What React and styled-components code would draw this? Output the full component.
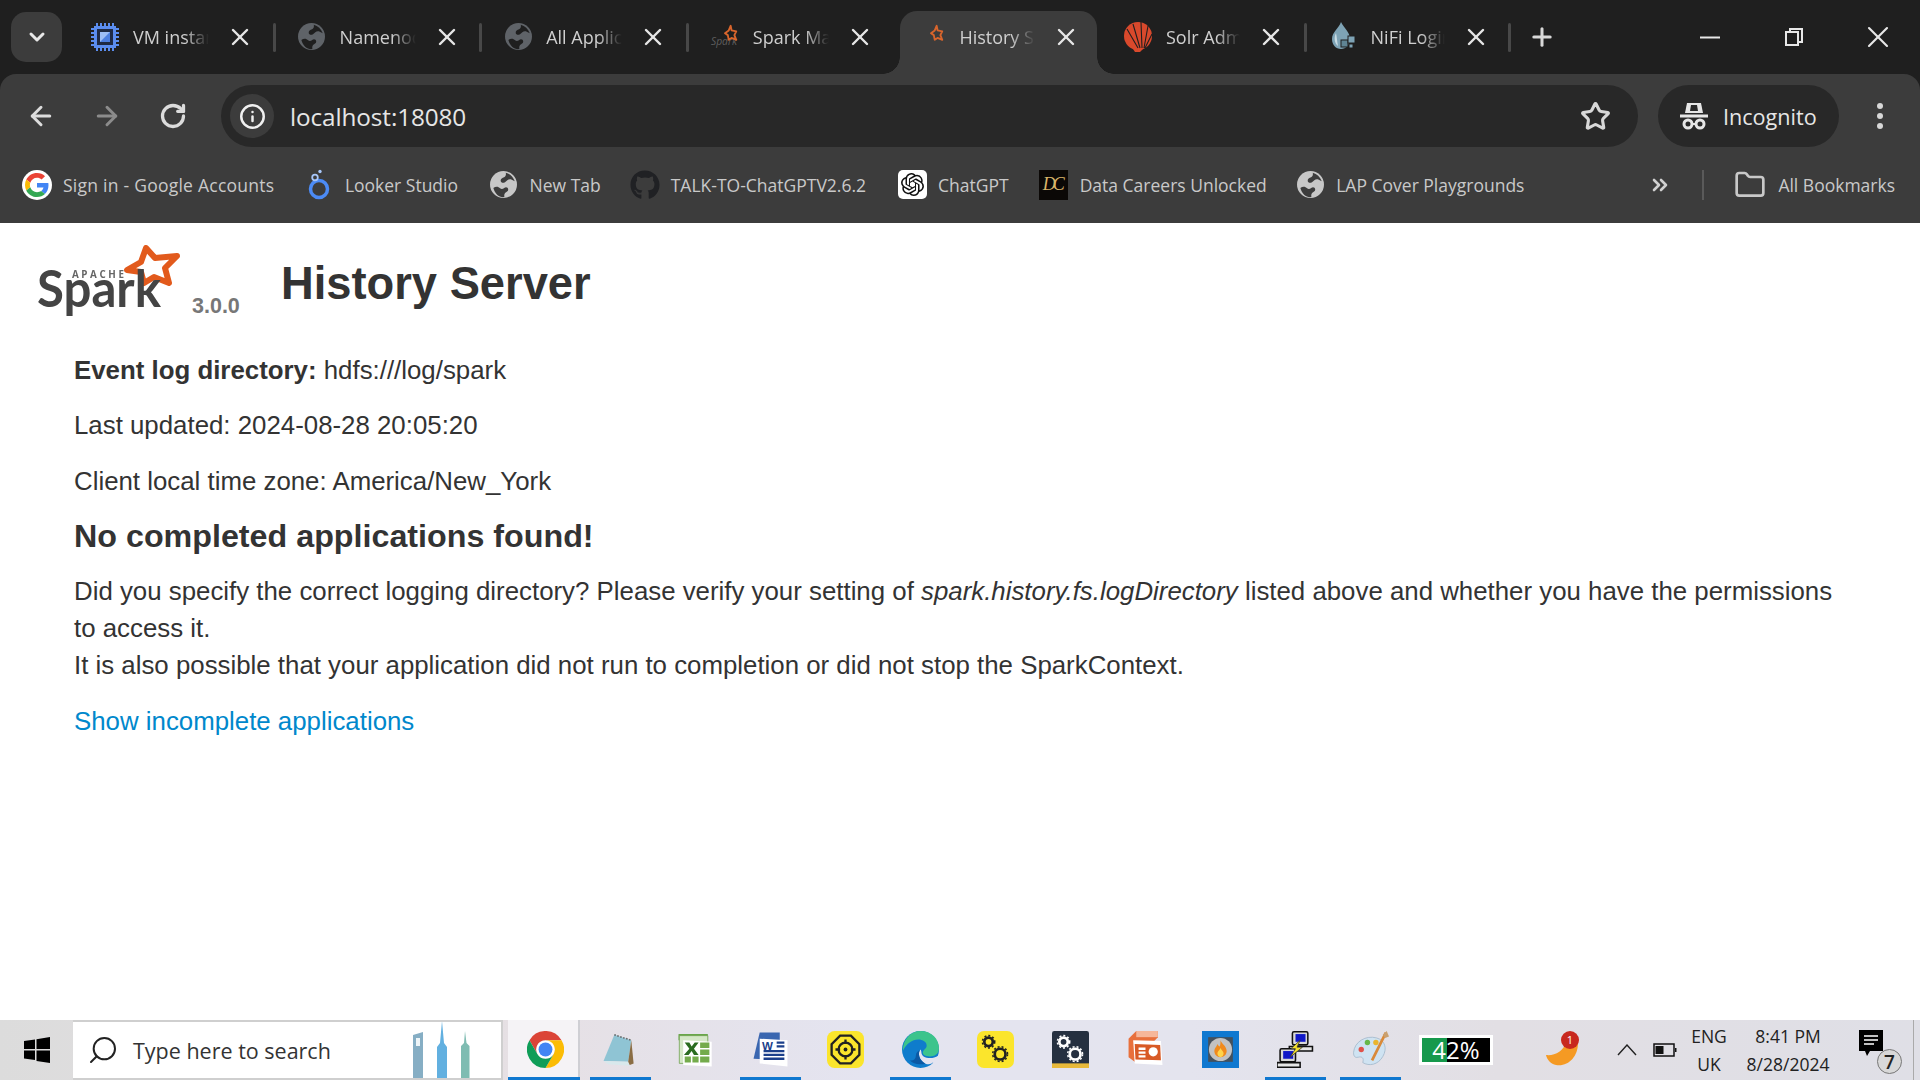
import React from "react";
import styled, { createGlobalStyle } from "styled-components";
import { ArrowLeft, ArrowRight, RotateCw, Info, Star, ChevronDown, X, Plus, Folder, ChevronsRight, Search } from "lucide-react";
import { FaGithub } from "react-icons/fa";
import { SiOpenai } from "react-icons/si";

const UI = `"Open Sans", "Noto Sans", sans-serif`;
const WEB = `"Liberation Sans", Arial, sans-serif`;

const Global = createGlobalStyle`
  html, body { margin: 0; padding: 0; height: 100%; background: #1f1f1f; overflow: hidden; }
  #root { height: 100%; }
  * { box-sizing: border-box; }
`;

const Shell = styled.div`
  display: flex; flex-direction: column; height: 1080px; width: 1920px; background: #1f1f1f;
`;
const TabStrip = styled.div`
  display: flex; align-items: center; height: 74px; padding-left: 11px; flex: none;
`;
const TabMenu = styled.div`
  width: 51px; height: 50px; margin-right: 7px; margin-top: -1px; border-radius: 15px; background: #3c3c3c;
  display: flex; align-items: center; justify-content: center; color: #e8e8e8; flex: none;
`;
const TabBox = styled.div`
  position: relative; flex: 0 0 ${p => (p.$narrow ? "204.6px" : "206.6px")}; height: 74px; display: flex; align-items: center; padding-left: 21px;
  z-index: ${p => (p.$active ? 2 : 1)};
  &::before {
    content: ""; display: ${p => (p.$active ? "block" : "none")}; position: absolute; left: 5px; right: 5px; top: 11px; bottom: 0;
    background: #3c3c3c; border-radius: 17px 17px 0 0;
  }
  &::after {
    content: ""; display: ${p => (p.$sep ? "block" : "none")}; position: absolute; right: 0; top: 23px; width: 3px; height: 29px;
    background: #484848; border-radius: 2px;
  }
`;
const Flare = styled.span`
  position: absolute; bottom: 0; width: 17px; height: 17px; ${p => (p.$side === "left" ? "left: -12px;" : "right: -12px;")}
  background: radial-gradient(circle at ${p => (p.$side === "left" ? "0 0" : "100% 0")}, transparent 16.5px, #3c3c3c 17px);
`;
const TabIcon = styled.span`
  position: relative; width: 30px; height: 30px; display: flex; align-items: center; justify-content: center; flex: none; margin-right: 13px; margin-top: -1px;
`;
const TabTitle = styled.span`
  position: relative; width: ${p => (p.$narrow ? "74px" : "76px")}; overflow: hidden; white-space: nowrap; font: 400 18px ${UI}; color: #cfcfcf; flex: none;
  -webkit-mask-image: linear-gradient(to right, #000 68%, transparent 100%);
  mask-image: linear-gradient(to right, #000 68%, transparent 100%);
`;
const TabClose = styled.span`
  position: relative; margin-left: 17px; display: flex; color: #e6e6e6; flex: none;
`;
const NewTab = styled.div`
  width: 62px; display: flex; justify-content: center; color: #d8d8d8; padding-right: 0;
`;
const WindowControls = styled.div`
  margin-left: auto; display: flex; align-items: center; height: 74px; color: #e8e8e8;
`;
const WinBtn = styled.div`
  width: 84px; display: flex; align-items: center; justify-content: center;
`;

const Chrome = styled.div`
  background: #3c3c3c; border-radius: 16px 16px 0 0; flex: none; height: 149px; display: flex; flex-direction: column;
`;
const NavRow = styled.div`
  display: flex; align-items: center; height: 84px; padding: 11px 0 11px 8px;
`;
const NavBtn = styled.div`
  width: 66px; display: flex; justify-content: center; color: ${p => (p.$off ? "#8c8c8c" : "#dcdcdc")}; flex: none;
`;
const Omnibox = styled.div`
  flex: 1; height: 62px; margin-left: 15px; border-radius: 31px; background: #282828; display: flex; align-items: center; padding: 0 27px 0 9px;
`;
const InfoChip = styled.div`
  width: 44px; height: 44px; border-radius: 50%; background: #3c3c3c; display: flex; align-items: center; justify-content: center; color: #f0f0f0;
`;
const Url = styled.div`
  margin-left: 16px; font: 400 24.3px ${UI}; color: #e6e6e6; letter-spacing: -0.1px;
`;
const StarBtn = styled.div`
  margin-left: auto; display: flex; color: #d8d8d8;
`;
const ProfileChip = styled.div`
  margin-left: 20px; width: 181px; height: 62px; border-radius: 31px; background: #282828; display: flex; align-items: center; padding-left: 21px; gap: 14px;
  font: 400 21.6px ${UI}; color: #e6e6e6; flex: none;
`;
const KebabCell = styled.div`
  width: 81px; display: flex; justify-content: center; flex: none;
`;
const BookmarkBar = styled.div`
  display: flex; align-items: center; height: 65px; padding: 0 25px 12px 22px;
`;
const Bookmark = styled.div`
  display: flex; align-items: center; margin-right: ${p => p.$gap}px; font: 400 17.5px ${UI}; color: #c9c9c9; white-space: nowrap;
  letter-spacing: ${p => p.$track || 0}px;
`;
const BmIcon = styled.span`
  display: flex; align-items: center; justify-content: center; width: 30px; height: 30px; margin-right: 11px; flex: none;
`;
const BookmarkEnd = styled.div`
  margin-left: auto; display: flex; align-items: center; font: 400 17.5px ${UI}; color: #c9c9c9; white-space: nowrap;
`;
const More = styled.span`
  display: flex; color: #d0d0d0; margin-right: 30px;
`;
const VSep = styled.span`
  width: 2px; height: 30px; background: #5a5a5a; margin-right: 30px;
`;
const FolderGlyph = styled.span`
  display: flex; color: #c9c9c9; margin-right: 12px;
`;

const Page = styled.main`
  flex: 1; background: #fff; padding: 22px 74px 0 37px; font: 400 25.83px/37.2px ${WEB}; color: #333;
`;
const PageHeader = styled.header`
  display: flex; align-items: flex-start; height: 72px; margin-bottom: 34.5px;
`;
const Logo = styled.svg`
  width: 141px; height: 72px; flex: none; filter: blur(0.4px); overflow: visible;
`;
const Version = styled.span`
  margin: 49px 0 0 14px; font: 700 21.5px/24px ${WEB}; color: #777; width: 49px; flex: none;
`;
const Title = styled.h3`
  margin: 14px 0 0 40px; font: 700 45.3px/50px ${WEB}; color: #333;
`;
const Body = styled.div`
  margin-left: 37px;
`;
const Para = styled.p`
  margin: 0 0 18.5px;
`;
const Subhead = styled.h4`
  margin: -1px 0 18px; font: 700 32.25px/37.2px ${WEB}; color: #333;
`;
const Notes = styled.p`
  margin: 0 0 19.4px; line-height: 37px;
`;
const Link = styled.a`
  color: #0088cc; text-decoration: none;
`;

const Taskbar = styled.footer`
  flex: none; height: 60px; display: flex; align-items: center; position: relative;
  background: linear-gradient(90deg, #dcdcdc 0%, #e6e0e4 27%, #e4e4f0 45%, #e4e4ee 62%, #e2dfe4 78%, #dfdfe6 100%);
`;
const StartBtn = styled.div`
  width: 73px; display: flex; justify-content: center; flex: none;
`;
const SearchBox = styled.div`
  width: 430px; height: 60px; flex: none; background: #fff; border: solid #cfcfcf; border-width: 2px 2px 2px 0; display: flex; align-items: center; padding-left: 14px;
  font: 400 21.5px ${UI}; color: #333; overflow: hidden;
`;
const SearchIcon = styled.span`
  display: flex; margin-right: 14px; color: #222; transform: scaleX(-1);
`;
const Skyline = styled.svg`
  margin-left: auto; margin-right: 26px; flex: none; width: 66px; height: 58px;
`;
const AppStrip = styled.div`
  display: flex; margin-left: 5px; flex: none;
`;
const AppCell = styled.div`
  position: relative; width: 75px; height: 60px; display: flex; align-items: center; justify-content: center;
  background: ${p => (p.$focused ? "linear-gradient(90deg,#f5f3f6 0 94%,#cfcfd4 94% 96%,transparent 96%)" : "transparent")};
  &::after {
    content: ""; display: ${p => (p.$on ? "block" : "none")}; position: absolute; bottom: 0; left: ${p => (p.$focused ? "0" : "7px")}; width: ${p => (p.$focused ? "72px" : "61px")}; height: 3px; background: #0f78d0;
  }
`;
const AppGlyph = styled.svg`
  width: 37px; height: 37px; margin-top: -1px;
`;
const Meter = styled.div`
  margin-left: 11px; width: 74px; height: 30px; background: #fff; padding: 3px; flex: none; display: flex;
`;
const MeterFill = styled.div`
  flex: 1; position: relative; display: flex; align-items: center; justify-content: center; font: 400 24px/24px ${UI}; color: #fff;
  background: linear-gradient(90deg, #16994c 0 37%, #000 37%);
`;
const Tray = styled.div`
  display: flex; align-items: center; flex: none; margin-left: 51px; font: 400 17.5px/28px ${UI}; color: #222;
`;
const TrayApp = styled.svg`
  width: 38px; height: 38px; flex: none; margin-right: 35px; overflow: visible;
`;
const Badge = styled.text`
  font: 400 11px ${UI}; fill: #fff;
`;
const TrayGlyph = styled.svg`
  flex: none; margin-right: ${p => p.$gap}px;
`;
const TrayStack = styled.div`
  display: flex; flex-direction: column; align-items: center; width: ${p => p.$w}px; margin-left: ${p => p.$ml || 0}px; flex: none; white-space: nowrap;
`;
const Notify = styled.div`
  position: relative; width: 40px; height: 44px; margin-left: 20px; flex: none;
`;
const BubbleGlyph = styled.svg`
  display: block; margin-top: 2px;
`;
const NotifyCount = styled.span`
  position: absolute; right: -4px; bottom: -2px; width: 25px; height: 25px; border-radius: 50%; background: #d8d8d8; border: 1.5px solid #777;
  display: flex; align-items: center; justify-content: center; font: 600 19px ${UI}; color: #222;
`;
const Edge = styled.span`
  position: absolute; right: 6px; top: 0; bottom: 0; width: 1px; background: #aaa;
`;

const Globe = ({ color = "#5f6368", bg = "#1f1f1f", size = 27 }) => (
  <svg width={size} height={size} viewBox="0 0 24 24">
    <circle cx="12" cy="12" r="12" fill={color} />
    <path fill={bg} d="M14 1.5c3.8 1 6.5 3.6 8 7.5l-3.5-1.6c-2.2-.7-3.4 1.4-5.2 2.6-1.6 1-3.6.5-3.8-1.3-.2-1.8 1.5-2.6 3-3.2 1.4-.6 2-2.4 1.5-4z" />
    <path fill={bg} d="M3 15c2-1.6 4.5-1.4 6 .3 1 1.1 2.6.6 3.6-.2 1.5-1.2 3.5-.6 3.6 1.3.1 1.7-1.8 2-2.8 3.2-.8 1-.8 2.2-.6 3.6-4.6.6-8.4-3-9.8-8.2z" />
  </svg>
);
const Chip = () => (
  <svg width="30" height="30" viewBox="0 0 30 30">
    <g stroke="#5b8def" strokeWidth="2">
      {[8, 12, 16, 20, 24].map(v => <path key={v} d={`M${v - 1} 1v28M1 ${v - 1}h28`} />)}
    </g>
    <rect x="4" y="4" width="22" height="22" fill="#5b8def" />
    <rect x="7" y="7" width="16" height="16" fill="#1f2a44" />
    <path d="M10 10h10v10H10z" fill="#9dbdf5" /><path d="M20 10v10H10z" fill="#4d7fe0" />
  </svg>
);
const Spot = ({ withWord }) => (
  <svg width="32" height="30" viewBox="0 0 32 30">
    {withWord && <text x="1" y="24" fontFamily={UI} fontStyle="italic" fontSize="11" fill="#5e5e5e">Spark</text>}
    <path d="M22 3l1 5 5 1-2 4 2 5-5-2-3 2-1-5-3-2 4-3z" fill="none" stroke="#d9652c" strokeWidth="2" strokeLinejoin="round" />
  </svg>
);
const Solr = () => (
  <svg width="30" height="32" viewBox="0 0 30 32">
    <circle cx="15" cy="15" r="14" fill="#d9492c" />
    <g stroke="#1f1f1f" strokeWidth="1.1" fill="none">
      <path d="M4 8l11 19M10 3l7 24M18 1l1 26M25 5l-4 22M29 13l-7 14" />
    </g>
    <path d="M10 28h10l-3 3h-5z" fill="#d9492c" />
  </svg>
);
const Nifi = () => (
  <svg width="30" height="32" viewBox="0 0 30 32">
    <path d="M13 1c3 6 9 10 9 17 0 6-4 10-9 10S4 24 4 18C4 11 11 7 13 1z" fill="#7ea3b5" />
    <path d="M8 12c-2 4-2 10 2 13-1-4-1-9-2-13z" fill="#c9dbe3" />
    <rect x="13" y="19" width="7" height="7" fill="#5f8494" stroke="#1f1f1f" />
    <rect x="20" y="15" width="7" height="7" fill="#7ea3b5" stroke="#1f1f1f" />
    <rect x="21" y="23" width="4" height="4" fill="#7ea3b5" stroke="#1f1f1f" />
  </svg>
);
const GoogleG = () => (
  <svg width="30" height="30" viewBox="-6 -6 60 60">
    <circle cx="24" cy="24" r="30" fill="#fff" />
    <path fill="#EA4335" d="M24 9.5c3.54 0 6.71 1.22 9.21 3.6l6.85-6.85C35.9 2.38 30.47 0 24 0 14.62 0 6.51 5.38 2.56 13.22l7.98 6.19C12.43 13.72 17.74 9.5 24 9.5z" />
    <path fill="#4285F4" d="M46.98 24.55c0-1.57-.15-3.09-.38-4.55H24v9.02h12.94c-.58 2.96-2.26 5.48-4.78 7.18l7.73 6c4.51-4.18 7.09-10.36 7.09-17.65z" />
    <path fill="#FBBC05" d="M10.53 28.59c-.48-1.45-.76-2.99-.76-4.59s.27-3.14.76-4.59l-7.98-6.19C.92 16.46 0 20.12 0 24c0 3.88.92 7.54 2.56 10.78l7.97-6.19z" />
    <path fill="#34A853" d="M24 48c6.48 0 11.93-2.13 15.89-5.81l-7.73-6c-2.15 1.45-4.92 2.3-8.16 2.3-6.26 0-11.57-4.22-13.47-9.91l-7.98 6.19C6.51 42.62 14.62 48 24 48z" />
  </svg>
);
const Looker = () => (
  <svg width="24" height="31" viewBox="0 0 24 31">
    <circle cx="12" cy="20" r="8.5" fill="none" stroke="#4c8bf5" strokeWidth="3.5" />
    <circle cx="8" cy="8.5" r="2.8" fill="none" stroke="#a8c7fa" strokeWidth="1.8" />
    <circle cx="13" cy="2.5" r="1.7" fill="#a8c7fa" />
  </svg>
);
const ChatTile = styled.span`
  width: 29px; height: 29px; border-radius: 5px; background: #fff; display: flex; align-items: center; justify-content: center; color: #111;
`;
const DcTile = styled.span`
  width: 29px; height: 30px; background: #0b0806; display: flex; align-items: center; justify-content: center;
  font: italic 400 18px "Liberation Serif", serif; color: #d9b56a; letter-spacing: -3px; padding-right: 3px;
`;
const Hat = () => (
  <svg width="30" height="30" viewBox="0 0 30 30" fill="none">
    <path d="M8 2h14l2 10H6z" fill="#e6e6e6" /><path d="M12 4h6l1 6h-8z" fill="#282828" />
    <path d="M1 15h28" stroke="#e6e6e6" strokeWidth="3" />
    <circle cx="9" cy="23" r="4" stroke="#e6e6e6" strokeWidth="3" /><circle cx="21" cy="23" r="4" stroke="#e6e6e6" strokeWidth="3" />
    <path d="M13 23h4" stroke="#e6e6e6" strokeWidth="2" />
  </svg>
);
const Kebab = () => (
  <svg width="8" height="28" viewBox="0 0 8 28" fill="#d8d8d8">
    <circle cx="4" cy="4" r="3" /><circle cx="4" cy="14" r="3" /><circle cx="4" cy="24" r="3" />
  </svg>
);
const Restore = () => (
  <svg width="20" height="20" viewBox="0 0 20 20" fill="none" stroke="#e8e8e8" strokeWidth="2">
    <rect x="2" y="5" width="12" height="13" /><path d="M6 5V2h12v13h-4" />
  </svg>
);
const Gears = ({ c }) => (
  <g fill="none" stroke={c}>
    <circle cx="15" cy="14" r="5.5" strokeWidth="3.5" />
    <circle cx="30" cy="30" r="7" strokeWidth="3.5" />
    <circle cx="15" cy="14" r="8" strokeWidth="2" strokeDasharray="2.6 2.6" />
    <circle cx="30" cy="30" r="9.6" strokeWidth="2" strokeDasharray="2.6 2.6" />
  </g>
);

const tabs = [
  { t: "VM instances", i: <Chip />, sep: true },
  { t: "Namenode information", i: <Globe />, sep: true },
  { t: "All Applications", i: <Globe />, sep: true },
  { t: "Spark Master at spark", i: <Spot withWord /> },
  { t: "History Server", i: <Spot />, active: true },
  { t: "Solr Admin", i: <Solr />, sep: true, narrow: true },
  { t: "NiFi Login", i: <Nifi />, sep: true, narrow: true },
];

const apps = [
  { on: true, focused: true, g: <>
    <path fill="#db4437" d="M3.2 12A24 24 0 0 1 44.8 12H24A12 12 0 0 0 13.6 30Z" />
    <path fill="#fbbc05" d="M44.8 12A24 24 0 0 1 24 48L34.4 30A12 12 0 0 0 24 12Z" />
    <path fill="#0f9d58" d="M24 48A24 24 0 0 1 3.2 12L13.6 30A12 12 0 0 0 34.4 30Z" />
    <circle cx="24" cy="24" r="11.5" fill="#fff" /><circle cx="24" cy="24" r="9" fill="#4285f4" /></> },
  { on: true, g: <>
    <path fill="#8fc4d4" d="M16 5l22 7-4 28-32-1z" />
    <path fill="#d8e8ec" d="M2 39l32 1 2 5-28-2z" />
    <path fill="#8a6d44" d="M38 12l3 30-5 2-2-4z" />
    <path d="M16 5l22 7" stroke="#666" strokeWidth="2" strokeDasharray="2 2" /></> },
  { g: <>
    <path fill="#5ea03a" d="M2 4h38v8H2z" /><path fill="#d5e8c7" stroke="#6fa050" d="M3 6h37v36H3z" />
    <path fill="#fff" d="M8 12l37 2v32l-37-2z" />
    <path fill="#74ab4c" d="M30 15h12v7H30zM30 24h12v7H30zM30 33h12v8H30zM10 33h8v8h-8zM20 33h8v8h-8z" />
    <path fill="#2a6b20" d="M10 15h6l3 5 4-5h5l-6 8 6 8h-6l-3-5-4 5H9l7-8z" /></> },
  { on: true, g: <>
    <path fill="#3a66b0" d="M2 36L10 2h26v36z" />
    <path fill="#fff" d="M10 10l36 2v34l-36-4z" />
    <path d="M32 15h10M32 20h10M15 26h27M15 31h27M15 36h27" stroke="#1b3f8b" strokeWidth="3" />
    <text x="13" y="24" fontFamily={WEB} fontWeight="700" fontSize="15" fill="#1b3f8b">W</text></> },
  { g: <>
    <rect x="0" y="0" width="48" height="48" rx="10" fill="#fbe52c" />
    <path d="M17 6h14l11 11v14L31 42H17L6 31V17z" fill="none" stroke="#222" strokeWidth="3" />
    <circle cx="24" cy="24" r="9" fill="none" stroke="#222" strokeWidth="3" /><circle cx="24" cy="24" r="2.5" fill="#222" />
    <path d="M24 11v6M24 31v6M11 24h6M31 24h6" stroke="#222" strokeWidth="3" /></> },
  { on: true, g: <>
    <circle cx="24" cy="24" r="24" fill="#0f7ccc" />
    <path fill="#3cc48c" d="M24 0C38 0 48 10 48 22 48 30 42 33 36 33 30 33 27 31 27 28 27 24 32 23 32 19 32 14 27 11 21 11 13 11 6 16 1 26 1 10 12 0 24 0Z" />
    <path fill="#e4e4f0" d="M47 32C41 36 33 36 28 33 24 30 26 26 24 24 20 28 22 38 30 42 34 44 38 43 40 41L48 48V32Z" />
    <path fill="#0c59a4" d="M24 24C20 28 22 38 30 42 25 44 15 44 10 38 14 39 18 37 18 32 18 28 21 26 24 24Z" /></> },
  { g: <>
    <rect x="0" y="0" width="48" height="48" rx="9" fill="#fbe52c" /><Gears c="#222" /></> },
  { g: <>
    <rect x="0" y="0" width="48" height="48" rx="3" fill="#253040" /><rect y="42" width="48" height="6" fill="#e8b93a" /><Gears c="#fff" /></> },
  { g: <>
    <path fill="#e8703c" d="M2 34V10L12 0h28v8L10 40z" /><path fill="#f6b79a" d="M12 0l28 0v8H12z" />
    <path fill="#fff" d="M8 12l36 1 2 31-36-2z" /><path fill="#d85a26" d="M10 17l33 1 1 20-33-1z" />
    <circle cx="34" cy="27" r="6" fill="#fff" /><path d="M15 23h9M15 28h9M15 33h9" stroke="#fff" strokeWidth="3" /></> },
  { g: <>
    <rect width="48" height="48" fill="#0f78d0" /><rect x="8" y="8" width="32" height="32" fill="#44505c" />
    <circle cx="24" cy="24" r="15" fill="#c2c2c2" />
    <path fill="#f08a1c" d="M24 12c2 5 8 8 8 14 0 5-4 8-8 8s-8-3-8-8c0-4 3-5 4-9 1 2 2 3 3 3 1-2 1-5 1-8z" />
    <path fill="#ffd44a" d="M24 22c1 3 4 4 4 7s-2 5-4 5-4-2-4-5 3-4 4-7z" /></> },
  { on: true, g: <>
    <rect x="20" y="1" width="20" height="17" rx="2" fill="#d8d8d8" stroke="#111" strokeWidth="2" /><rect x="24" y="4" width="13" height="10" fill="#1018c8" />
    <path d="M16 20h30v6H16z" fill="#e6e6e6" stroke="#111" strokeWidth="2" />
    <rect x="4" y="23" width="20" height="17" rx="2" fill="#d8d8d8" stroke="#111" strokeWidth="2" /><rect x="8" y="26" width="13" height="10" fill="#1018c8" />
    <path d="M0 41h30v6H0z" fill="#e6e6e6" stroke="#111" strokeWidth="2" />
    <path d="M30 12L18 23h6l-7 11 16-13h-7z" fill="#f4e02a" stroke="#333" /></> },
  { on: true, g: <>
    <path fill="#cfe3f2" stroke="#9fb5c8" d="M2 28C3 14 18 5 32 9c11 3 14 14 8 24-6 11-18 13-26 8 2-7-2-8-6-7-4 1-6-1-6-6z" />
    <circle cx="12" cy="24" r="3.5" fill="#e0524a" /><circle cx="20" cy="15" r="3.5" fill="#66b84a" /><circle cx="31" cy="15" r="3.5" fill="#eab52e" />
    <path d="M44 2L26 38" stroke="#d98a3a" strokeWidth="3.5" /><path d="M40 5l5-5 3 7-5 2z" fill="#c9a070" /></> },
];

export default function App() {
  return (
    <Shell>
      <Global />
      <TabStrip>
        <TabMenu><ChevronDown size={24} strokeWidth={3} /></TabMenu>
        {tabs.map(tab => (
          <TabBox key={tab.t} $active={tab.active} $sep={tab.sep} $narrow={tab.narrow}>
            {tab.active && <><Flare $side="left" /><Flare $side="right" /></>}
            <TabIcon>{tab.i}</TabIcon>
            <TabTitle $narrow={tab.narrow}>{tab.t}</TabTitle>
            <TabClose><X size={28} strokeWidth={2.1} /></TabClose>
          </TabBox>
        ))}
        <NewTab><Plus size={28} strokeWidth={2.6} /></NewTab>
        <WindowControls>
          <WinBtn><svg width="20" height="3"><rect width="20" height="2" y="0.5" fill="#e8e8e8" /></svg></WinBtn>
          <WinBtn><Restore /></WinBtn>
          <WinBtn><X size={36} strokeWidth={1.4} /></WinBtn>
        </WindowControls>
      </TabStrip>
      <Chrome>
        <NavRow>
          <NavBtn><ArrowLeft size={30} strokeWidth={2.4} /></NavBtn>
          <NavBtn $off><ArrowRight size={30} strokeWidth={2.4} /></NavBtn>
          <NavBtn><RotateCw size={28} strokeWidth={2.8} /></NavBtn>
          <Omnibox>
            <InfoChip><Info size={27} strokeWidth={2.2} /></InfoChip>
            <Url>localhost:18080</Url>
            <StarBtn><Star size={31} strokeWidth={2.4} /></StarBtn>
          </Omnibox>
          <ProfileChip><Hat />Incognito</ProfileChip>
          <KebabCell><Kebab /></KebabCell>
        </NavRow>
        <BookmarkBar>
          <Bookmark $gap={29.5} $track={0.25}><BmIcon><GoogleG /></BmIcon>Sign in - Google Accounts</Bookmark>
          <Bookmark $gap={30.5}><BmIcon><Looker /></BmIcon>Looker Studio</Bookmark>
          <Bookmark $gap={29}><BmIcon><Globe color="#c7c7c7" bg="#3c3c3c" /></BmIcon>New Tab</Bookmark>
          <Bookmark $gap={31}><BmIcon><FaGithub size={30} color="#202124" /></BmIcon>TALK-TO-ChatGPTV2.6.2</Bookmark>
          <Bookmark $gap={30}><BmIcon><ChatTile><SiOpenai size={23} /></ChatTile></BmIcon>ChatGPT</Bookmark>
          <Bookmark $gap={28.5}><BmIcon><DcTile>DC</DcTile></BmIcon>Data Careers Unlocked</Bookmark>
          <Bookmark $gap={0}><BmIcon><Globe color="#c7c7c7" bg="#3c3c3c" /></BmIcon>LAP Cover Playgrounds</Bookmark>
          <BookmarkEnd>
            <More><ChevronsRight size={24} strokeWidth={2.6} /></More>
            <VSep />
            <FolderGlyph><Folder size={32} strokeWidth={2} /></FolderGlyph>
            All Bookmarks
          </BookmarkEnd>
        </BookmarkBar>
      </Chrome>
      <Page>
        <PageHeader>
          <Logo viewBox="0 0 141 72">
            <path d="M109 3l9 10 22-2-12 12 4 15-15-6-10 6-3-11-14-2 14-8z" fill="none" stroke="#e25a1c" strokeWidth="6" strokeLinejoin="round" />
            <text x="35" y="33" fontFamily={UI} fontWeight="700" fontSize="9.8" letterSpacing="2.6" fill="#666">APACHE</text>
            <text x="0" y="62" fontFamily={`Lato, ${UI}`} fontWeight="700" fontSize="52" textLength="124" lengthAdjust="spacingAndGlyphs" fill="#444">Spark</text>
          </Logo>
          <Version>3.0.0</Version>
          <Title>History Server</Title>
        </PageHeader>
        <Body>
          <Para><strong>Event log directory:</strong> hdfs:///log/spark</Para>
          <Para>Last updated: 2024-08-28 20:05:20</Para>
          <Para>Client local time zone: America/New_York</Para>
          <Subhead>No completed applications found!</Subhead>
          <Notes>
            Did you specify the correct logging directory? Please verify your setting of <em>spark.history.fs.logDirectory</em> listed above and whether you have the permissions to access it.
            <br />
            It is also possible that your application did not run to completion or did not stop the SparkContext.
          </Notes>
          <Para><Link href="#">Show incomplete applications</Link></Para>
        </Body>
      </Page>
      <Taskbar>
        <StartBtn>
          <svg width="26" height="26" viewBox="0 0 26 26" fill="#000"><path d="M0 4l11-1.6V12H0zM12.5 2.2L26 0v12H12.5zM0 13.5h11v9.6L0 21.5zM12.5 13.5H26V26l-13.5-2z" /></svg>
        </StartBtn>
        <SearchBox>
          <SearchIcon><Search size={32} strokeWidth={1.5} /></SearchIcon>
          Type here to search
          <Skyline viewBox="0 0 66 58">
            <path d="M4 14l10-3v47H4z" fill="#86aec4" /><path d="M7 17h4v8H7z" fill="#eef5f8" />
            <path d="M33 0l2 22 3 4v32H28V26l3-4z" fill="#62b0e0" />
            <path d="M56 10l1.5 12 3 3v33H52V25l3-3z" fill="#7fbcb2" />
          </Skyline>
        </SearchBox>
        <AppStrip>
          {apps.map((a, i) => (
            <AppCell key={i} $on={a.on} $focused={a.focused}><AppGlyph viewBox="0 0 48 48">{a.g}</AppGlyph></AppCell>
          ))}
        </AppStrip>
        <Meter><MeterFill>42%</MeterFill></Meter>
        <Tray>
          <TrayApp viewBox="0 0 38 38">
            <path d="M2 24c8 1 18-3 20-14 2-2 12-6 12 2 0 14-10 24-22 22-5-1-9-5-10-10z" fill="#f59a23" />
            <circle cx="26" cy="9" r="9" fill="#c8281e" />
            <Badge x="26" y="13" textAnchor="middle">1</Badge>
          </TrayApp>
          <TrayGlyph $gap={16} width="20" height="12" viewBox="0 0 20 12" fill="none" stroke="#222" strokeWidth="1.4"><path d="M1 11l9-10 9 10" /></TrayGlyph>
          <TrayGlyph $gap={7} width="24" height="14" viewBox="0 0 24 14" fill="none"><rect x="1" y="1" width="20" height="12" stroke="#111" strokeWidth="1.5" /><rect x="2.5" y="3" width="8" height="8" fill="#111" /><rect x="22" y="5" width="1.5" height="4" fill="#111" /></TrayGlyph>
          <TrayStack $w="50"><span>ENG</span><span>UK</span></TrayStack>
          <TrayStack $w="100" $ml={4}><span>8:41 PM</span><span>8/28/2024</span></TrayStack>
          <Notify>
            <BubbleGlyph width="26" height="30" viewBox="0 0 26 30">
              <path d="M1 0h24v21H12l-3 5-2-5H1z" fill="#000" />
              <path d="M6 6h14M6 10h14M6 14h10" stroke="#fff" strokeWidth="1.4" />
            </BubbleGlyph>
            <NotifyCount>7</NotifyCount>
          </Notify>
        </Tray>
        <Edge />
      </Taskbar>
    </Shell>
  );
}
